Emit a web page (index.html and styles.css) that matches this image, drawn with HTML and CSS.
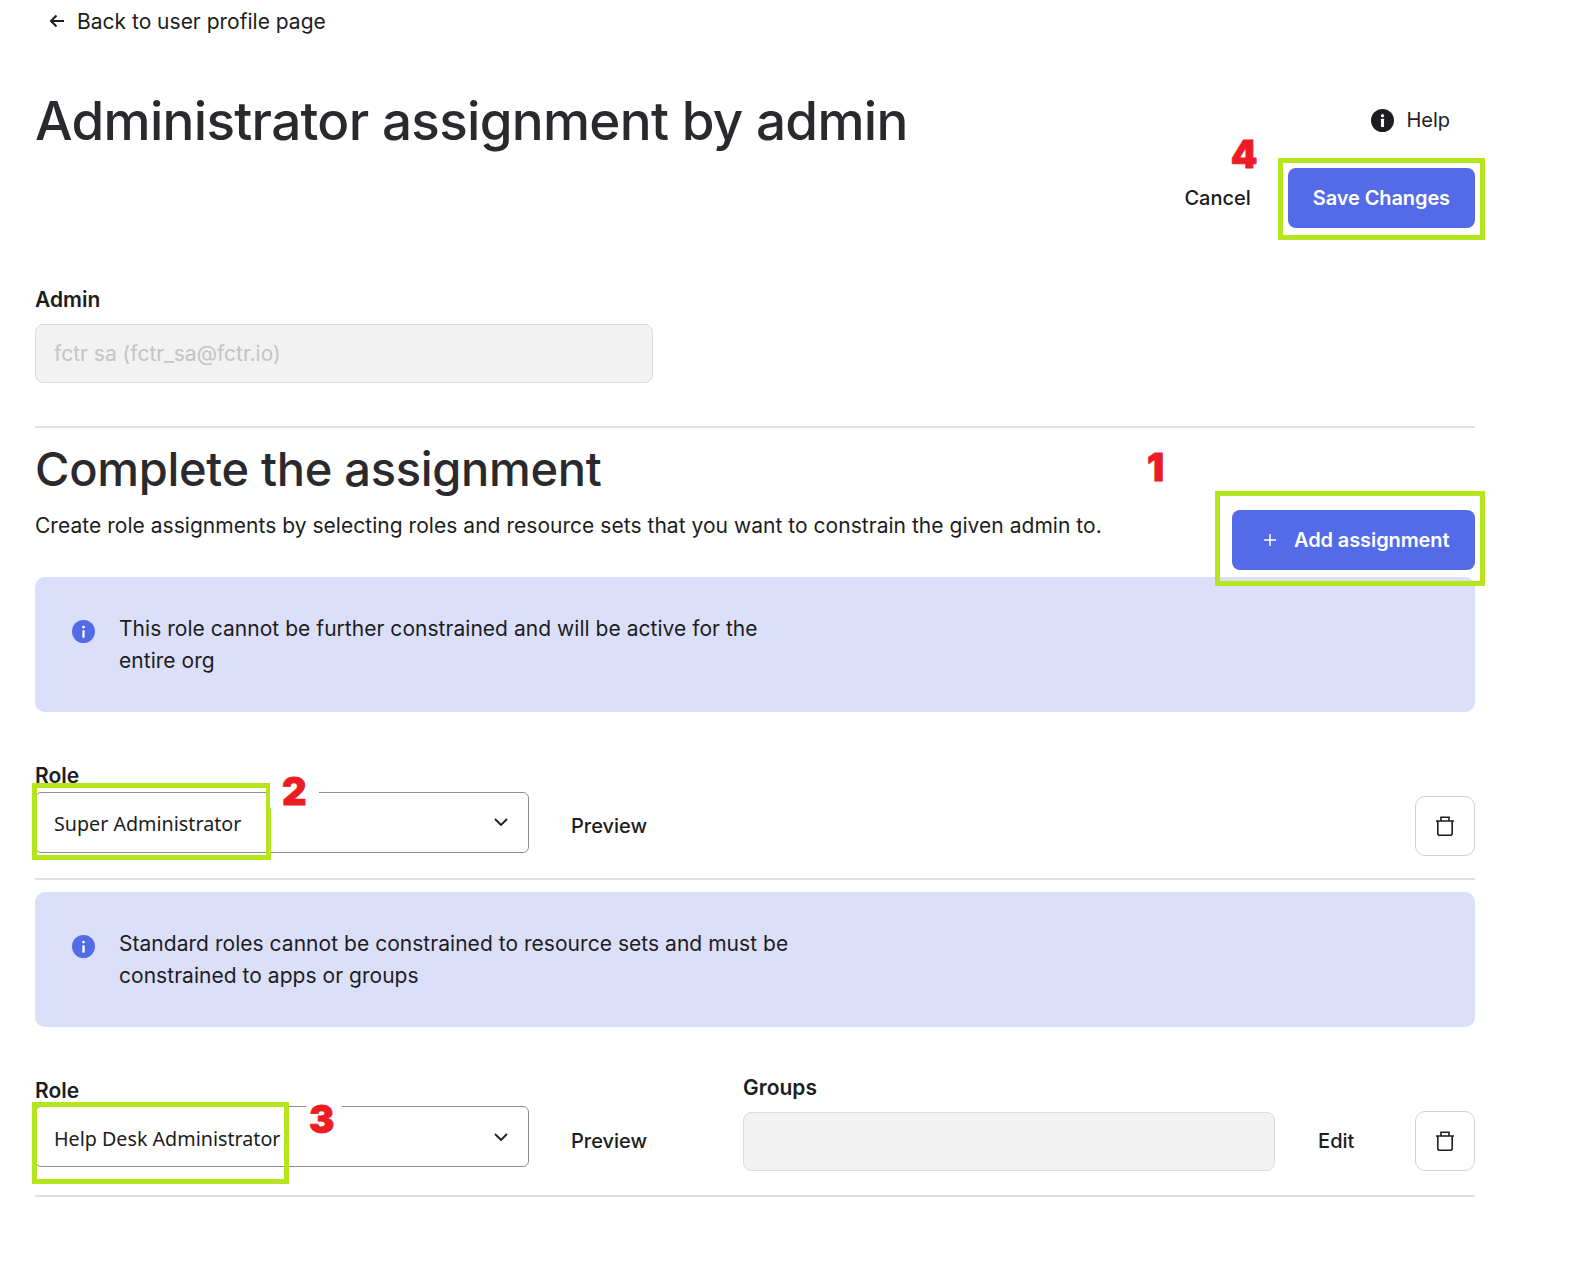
FILE: index.html
```html
<!DOCTYPE html>
<html lang="en">
<head>
    <meta charset="UTF-8">
    <meta name="viewport" content="width=device-width, initial-scale=1.0">
    <title>Administrator assignment by admin</title>
    <link rel="stylesheet" href="styles.css">
</head>
<body>
    <div class="page">
        <a class="back-link" href="#">
            <svg class="back-icon" viewBox="0 0 16 16" width="16" height="16" fill="none" stroke="#1d1d21" stroke-width="2"><path d="M15 8H2M7.5 2.5 2 8l5.5 5.5"/></svg>
            Back to user profile page
        </a>

        <div class="page-head">
            <h1>Administrator assignment by admin</h1>
            <div class="head-side">
                <a class="help-link" href="#">
                    <svg viewBox="0 0 24 24" width="23" height="23"><circle cx="12" cy="12" r="12" fill="#1d1d21"/><circle cx="12" cy="7" r="1.7" fill="#fff"/><rect x="10.4" y="10.2" width="3.2" height="8.6" rx=".6" fill="#fff"/></svg>
                    Help
                </a>
                <div class="head-actions">
                    <button class="btn-text cancel-btn">Cancel</button>
                    <div class="marked">
                        <button class="btn-primary save-btn">Save Changes</button>
                        <span class="mark mark-save"></span>
                        <span class="step step-4">4</span>
                    </div>
                </div>
            </div>
        </div>

        <div class="admin-field">
            <label for="admin">Admin</label>
            <input type="text" id="admin" class="text-input" value="fctr sa (fctr_sa@fctr.io)" disabled>
        </div>

        <section class="assignment">
            <div class="assignment-head">
                <div>
                    <h2>Complete the assignment</h2>
                    <p class="lead">Create role assignments by selecting roles and resource sets that you want to constrain the given admin to.</p>
                </div>
                <div class="marked">
                    <button class="btn-primary add-btn">
                        <svg viewBox="0 0 14 14" width="14" height="14" fill="none" stroke="#fff" stroke-width="1.5"><path d="M7 1v12M1 7h12"/></svg>
                        Add assignment
                    </button>
                    <span class="mark mark-add"></span>
                    <span class="step step-1">1</span>
                </div>
            </div>

            <div class="notice">
                <svg viewBox="0 0 24 24" width="23" height="23"><circle cx="12" cy="12" r="12" fill="#546be7"/><circle cx="12" cy="7.4" r="1.5" fill="#fff"/><rect x="10.8" y="10.6" width="2.4" height="7.8" rx=".5" fill="#fff"/></svg>
                <p>This role cannot be further constrained and will be active for the entire org</p>
            </div>

            <div class="role-row">
                <div class="role-field">
                    <label>Role</label>
                    <div class="select-wrap">
                        <select class="role-select">
                            <option>Super Administrator</option>
                        </select>
                        <svg class="chevron" viewBox="0 0 14 8" width="14" height="8" fill="none" stroke="#1d1d21" stroke-width="1.8"><path d="M1 1l6 6 6-6"/></svg>
                        <span class="mark mark-role1"></span>
                        <span class="step step-2">2</span>
                    </div>
                </div>
                <button class="btn-text preview-btn">Preview</button>
                <button class="btn-icon">
                    <svg viewBox="0 0 20 20" width="20" height="20" fill="none" stroke="#1d1d21" stroke-width="1.6"><path d="M1 5h18M6 5V1.2h8V5M2.8 5v12.2a2 2 0 0 0 2 2h10.4a2 2 0 0 0 2-2V5"/></svg>
                </button>
            </div>

            <div class="notice notice-second">
                <svg viewBox="0 0 24 24" width="23" height="23"><circle cx="12" cy="12" r="12" fill="#546be7"/><circle cx="12" cy="7.4" r="1.5" fill="#fff"/><rect x="10.8" y="10.6" width="2.4" height="7.8" rx=".5" fill="#fff"/></svg>
                <p>Standard roles cannot be constrained to resource sets and must be constrained to apps or groups</p>
            </div>

            <div class="role-row role-row-second">
                <div class="role-field">
                    <label>Role</label>
                    <div class="select-wrap">
                        <select class="role-select">
                            <option>Help Desk Administrator</option>
                        </select>
                        <svg class="chevron" viewBox="0 0 14 8" width="14" height="8" fill="none" stroke="#1d1d21" stroke-width="1.8"><path d="M1 1l6 6 6-6"/></svg>
                        <span class="mark mark-role2"></span>
                        <span class="step step-3">3</span>
                    </div>
                </div>
                <button class="btn-text preview-btn">Preview</button>
                <div class="groups-field">
                    <label for="groups">Groups</label>
                    <input type="text" id="groups" class="text-input" disabled>
                </div>
                <button class="btn-text edit-btn">Edit</button>
                <button class="btn-icon">
                    <svg viewBox="0 0 20 20" width="20" height="20" fill="none" stroke="#1d1d21" stroke-width="1.6"><path d="M1 5h18M6 5V1.2h8V5M2.8 5v12.2a2 2 0 0 0 2 2h10.4a2 2 0 0 0 2-2V5"/></svg>
                </button>
            </div>
        </section>
    </div>
</body>
</html>
```

FILE: styles.css
```css
* {
    box-sizing: border-box;
}
body {
    margin: 0;
    font-family: Inter, "Noto Sans", sans-serif;
    background-color: #fff;
    color: #1d1d21;
}
.page {
    width: 1475px;
    padding-left: 35px;
}
a {
    color: inherit;
    text-decoration: none;
}
button {
    font-family: inherit;
    cursor: pointer;
}
label {
    display: block;
    font-size: 21px;
    line-height: 24px;
    font-weight: 600;
}
.back-link {
    display: flex;
    align-items: center;
    gap: 12px;
    height: 42px;
    padding-left: 14px;
    font-size: 21px;
}
.page-head {
    display: flex;
    justify-content: space-between;
    align-items: flex-start;
    height: 246px;
}
h1 {
    margin: 44px 0 0;
    font-size: 53px;
    line-height: 70px;
    font-weight: 500;
    letter-spacing: -0.7px;
    color: #2a2a2e;
}
.head-side {
    display: flex;
    flex-direction: column;
    align-items: flex-end;
}
.help-link {
    display: flex;
    align-items: center;
    gap: 12px;
    height: 24px;
    margin: 66px 25px 0 0;
    font-size: 20px;
}
.head-actions {
    display: flex;
    align-items: center;
    gap: 37px;
    margin-top: 36px;
}
.btn-text {
    padding: 0;
    border: none;
    background: none;
    color: #1d1d21;
    font-size: 20px;
    font-weight: 500;
}
.btn-primary {
    display: flex;
    align-items: center;
    height: 60px;
    border: none;
    border-radius: 8px;
    background-color: #546be7;
    color: #fff;
    font-size: 20px;
    font-weight: 600;
    letter-spacing: -0.1px;
}
.save-btn {
    padding: 0 25px;
}
.add-btn {
    gap: 17px;
    width: 243px;
    padding: 0 0 0 31px;
}
.marked {
    position: relative;
}
.mark {
    position: absolute;
    border: 5px solid #b5e61d;
    pointer-events: none;
}
.mark-save {
    inset: -10px -10px -12px -10px;
}
.mark-add {
    inset: -19px -10px -16px -17px;
}
.mark-role1 {
    left: -3px;
    top: -9px;
    width: 239px;
    height: 77px;
}
.mark-role2 {
    left: -3px;
    top: -4px;
    width: 257px;
    height: 82px;
}
.step {
    position: absolute;
    background-color: #fff;
    color: #ed1c24;
    font-size: 38px;
    line-height: 34px;
    font-weight: 900;
    -webkit-text-stroke: 0.8px #ed1c24;
}
.step-4 {
    left: -57px;
    top: -31px;
    background: none;
}
.step-1 {
    left: -85px;
    top: -60px;
    background: none;
}
.step-2 {
    left: 235px;
    top: -18px;
    padding: 0 12px;
}
.step-3 {
    left: 271px;
    top: -4px;
    padding: 0 8px 0 3px;
}
.text-input {
    display: block;
    height: 59px;
    padding: 0 18px;
    border: 1px solid #dcdcdc;
    border-radius: 8px;
    background-color: #f2f2f2;
    color: #c4c4c4;
    font-family: inherit;
    font-size: 21px;
}
.admin-field .text-input {
    width: 618px;
    margin-top: 12px;
}
.assignment {
    margin-top: 43px;
    border-top: 2px solid #e1e1e1;
}
.assignment-head {
    display: flex;
    justify-content: space-between;
    align-items: flex-start;
    height: 149px;
}
.assignment-head .marked {
    margin-top: 82px;
}
h2 {
    margin: 11px 0 0;
    font-size: 47px;
    line-height: 60px;
    font-weight: 500;
    letter-spacing: -0.3px;
    color: #2a2a2e;
}
.lead {
    margin: 11px 0 0;
    font-size: 21px;
    line-height: 32px;
    letter-spacing: 0.035px;
}
.notice {
    display: flex;
    align-items: flex-start;
    gap: 24px;
    height: 135px;
    padding: 36px 25px 0 37px;
    border-radius: 10px;
    background-color: #dbdffa;
}
.notice svg {
    flex: none;
    margin-top: 7px;
}
.notice p {
    width: 680px;
    margin: 0;
    font-size: 21px;
    line-height: 32px;
    letter-spacing: 0.035px;
}
.notice-second {
    margin-top: 12px;
}
.role-row {
    display: flex;
    align-items: flex-end;
    height: 168px;
    padding-bottom: 22px;
    border-bottom: 2px solid #e1e1e1;
}
.role-row-second {
    height: 170px;
    padding-bottom: 24px;
}
.role-field {
    width: 494px;
    padding-bottom: 3px;
}
.role-field label {
    margin-bottom: 4px;
}
.role-row-second .role-field {
    padding-bottom: 4px;
}
.role-row-second .role-field label {
    margin-bottom: 3px;
}
.select-wrap {
    position: relative;
}
.role-select {
    display: block;
    width: 100%;
    height: 61px;
    padding: 2px 18px 0;
    appearance: none;
    border: 1px solid #8c8c96;
    border-radius: 6px;
    background-color: #fff;
    color: #1d1d21;
    font-family: "Noto Sans", sans-serif;
    font-size: 19.7px;
}
.role-row-second .role-select {
    padding-top: 4px;
}
.chevron {
    position: absolute;
    right: 21px;
    top: 26px;
}
.role-row-second .chevron {
    top: 27px;
}
.preview-btn {
    height: 60px;
    margin-left: 42px;
}
.btn-icon {
    display: flex;
    align-items: center;
    justify-content: center;
    width: 60px;
    height: 60px;
    margin-left: auto;
    padding: 0;
    border: 1px solid #d2d2d2;
    border-radius: 10px;
    background: #fff;
}
.groups-field {
    margin-left: 96px;
}
.groups-field .text-input {
    width: 532px;
    margin-top: 12px;
}
.edit-btn {
    height: 60px;
    margin-left: 43px;
}
```
